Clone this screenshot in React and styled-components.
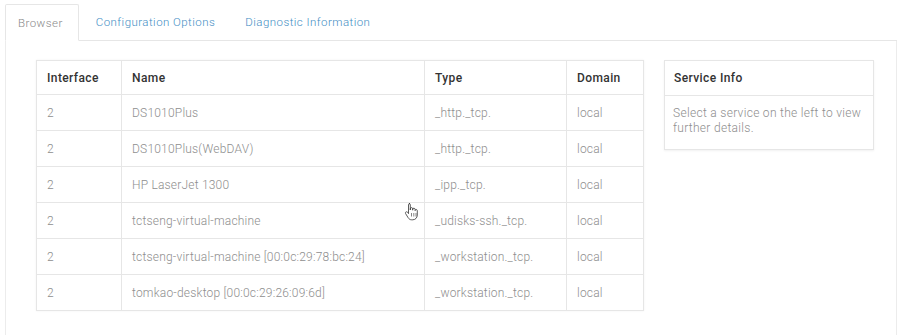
import React from "react";
import styled, { createGlobalStyle } from "styled-components";

const GlobalStyle = createGlobalStyle`
  body {
    margin: 0;
    background: #fff;
    font-family: Roboto, "Liberation Sans", sans-serif;
  }
`;

const Page = styled.div`
  width: 901px;
  height: 335px;
  padding: 4px 4px 0 5px;
  box-sizing: border-box;
  position: relative;
  overflow: hidden;
`;

const Tabs = styled.ul`
  display: flex;
  margin: 0;
  padding: 0;
  list-style: none;
  border-bottom: 1px solid #e6e6e6;
  height: 36px;
`;

const Tab = styled.li`
  display: flex;
  align-items: center;
  padding: ${(p) => (p.$active ? "0 15px 0 12px" : "0 13px 0 17px")};
  font-size: 11.5px;
  font-weight: 300;
  letter-spacing: 0.45px;
  color: ${(p) => (p.$active ? "#8a8a8a" : "#3f8ec4")};
  background: #fff;
  border-radius: 2px 2px 0 0;
  ${(p) =>
    p.$active &&
    `
    border: 1px solid #e6e6e6;
    border-bottom-color: #fff;
    margin-bottom: -1px;
  `}
`;

const Panel = styled.div`
  border: 1px solid #ececec;
  border-top: none;
  height: 300px;
  padding: 19px 0 0 30px;
  display: flex;
  align-items: flex-start;
  gap: 20px;
`;

const Table = styled.table`
  border-collapse: collapse;
  width: 607px;
  table-layout: fixed;
  font-size: 12px;
  box-shadow: 0 0 2px rgba(0, 0, 0, 0.06);
`;

const Th = styled.th`
  text-align: left;
  font-weight: 500;
  color: #333;
  height: 34px;
  padding: 0 10px;
  letter-spacing: 0.4px;
  border: 1px solid #e6e6e6;
  width: ${(p) => p.$w}px;
  box-sizing: border-box;
`;

const Td = styled.td`
  height: 35px;
  padding: 0 10px;
  border: 1px solid #e6e6e6;
  color: #8e8e8e;
  font-weight: 300;
  letter-spacing: 0.2px;
  white-space: nowrap;
`;

const InfoBox = styled.div`
  width: 208px;
  border: 1px solid #e6e6e6;
  box-shadow: 0 1px 2px rgba(0, 0, 0, 0.06);
  font-size: 12px;
`;

const InfoHead = styled.div`
  height: 34px;
  display: flex;
  align-items: center;
  padding: 0 9px;
  font-weight: 500;
  letter-spacing: 0.4px;
  color: #333;
  border-bottom: 1px solid #e6e6e6;
`;

const InfoBody = styled.div`
  padding: 10px 8px 13px;
  color: #8e8e8e;
  font-weight: 300;
  letter-spacing: 0.3px;
  line-height: 15px;
`;

const Cursor = styled.svg`
  position: absolute;
  left: 404px;
  top: 201px;
`;

const services = [
  ["2", "DS1010Plus", "_http._tcp.", "local"],
  ["2", "DS1010Plus(WebDAV)", "_http._tcp.", "local"],
  ["2", "HP LaserJet 1300", "_ipp._tcp.", "local"],
  ["2", "tctseng-virtual-machine", "_udisks-ssh._tcp.", "local"],
  ["2", "tctseng-virtual-machine [00:0c:29:78:bc:24]", "_workstation._tcp.", "local"],
  ["2", "tomkao-desktop [00:0c:29:26:09:6d]", "_workstation._tcp.", "local"],
];

function HandCursor() {
  return (
    <Cursor width="16" height="22" viewBox="0 0 16 20">
      <path
        d="M5 1.5c.8 0 1.3.5 1.3 1.3V8V6.8c0-.7.5-1.2 1.2-1.2s1.2.5 1.2 1.2v1.4V7.4c0-.7.5-1.2 1.2-1.2s1.2.5 1.2 1.2v1.2c0-.7.5-1.1 1.1-1.1s1.1.5 1.1 1.1V13c0 2.6-1.8 4.8-4.6 4.8H7.6c-1.5 0-2.6-.8-3.4-2L1.6 11.6c-.4-.6-.2-1.3.3-1.6.6-.4 1.3-.2 1.7.3l.9 1.3V2.8c0-.8.5-1.3 1.3-1.3z"
        fill="#fff"
        stroke="#333"
        strokeWidth="0.8"
        strokeLinejoin="round"
      />
      <path d="M7.5 11v3.5M9.8 11v3.5M12 11v3.5" stroke="#333" strokeWidth="0.6" />
    </Cursor>
  );
}

export default function App() {
  return (
    <Page>
      <GlobalStyle />
      <Tabs>
        <Tab $active>Browser</Tab>
        <Tab>Configuration Options</Tab>
        <Tab>Diagnostic Information</Tab>
      </Tabs>
      <Panel>
        <Table>
          <thead>
            <tr>
              <Th $w={85}>Interface</Th>
              <Th $w={303}>Name</Th>
              <Th $w={142}>Type</Th>
              <Th $w={77}>Domain</Th>
            </tr>
          </thead>
          <tbody>
            {services.map((s, i) => (
              <tr key={i}>
                {s.map((c, j) => (
                  <Td key={j}>{c}</Td>
                ))}
              </tr>
            ))}
          </tbody>
        </Table>
        <InfoBox>
          <InfoHead>Service Info</InfoHead>
          <InfoBody>Select a service on the left to view further details.</InfoBody>
        </InfoBox>
      </Panel>
      <HandCursor />
    </Page>
  );
}
